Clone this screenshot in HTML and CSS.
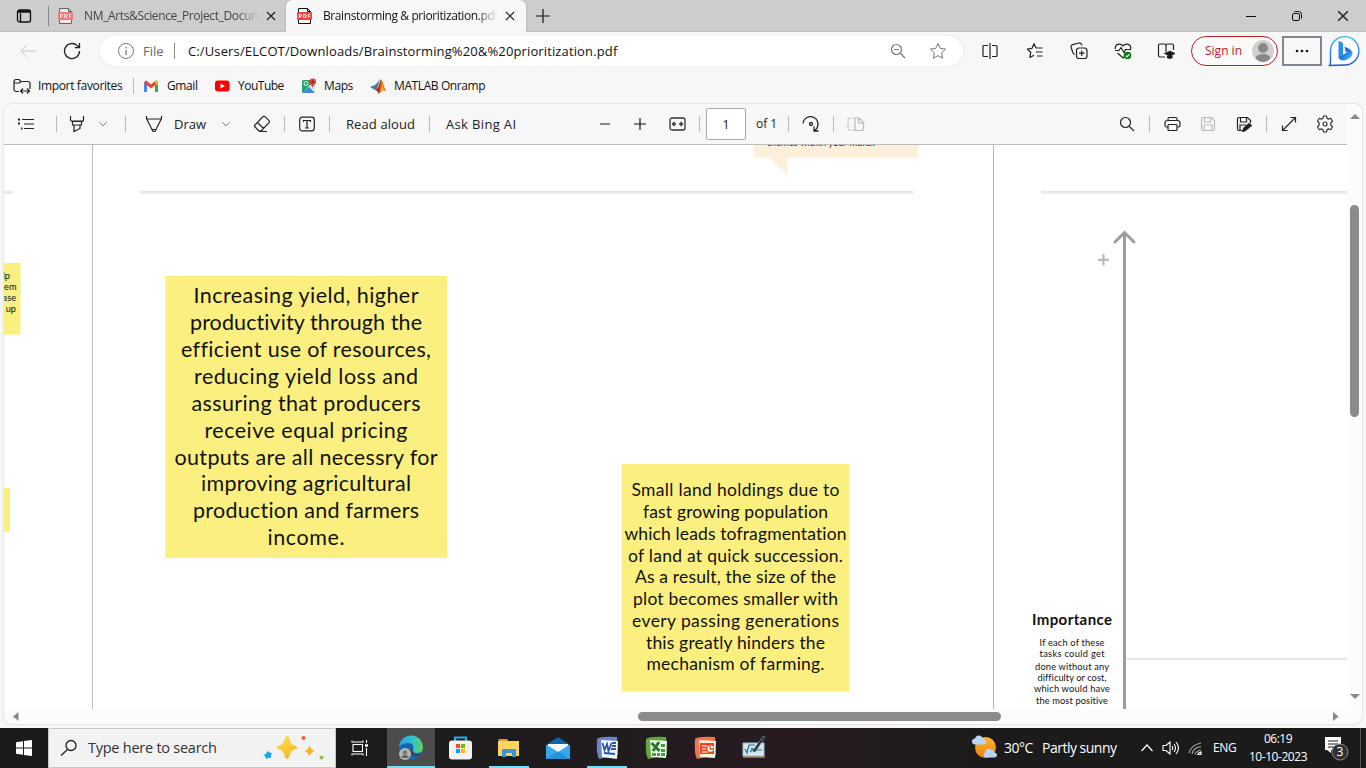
FILE: index.html
```html
<!DOCTYPE html>
<html lang="en">
<head>
<meta charset="utf-8">
<title>Brainstorming &amp; prioritization.pdf</title>
<link rel="stylesheet" href="styles.css">
</head>
<body>
<svg class="defs" width="0" height="0">
  <symbol id="pdf" viewBox="0 0 16 16"><path d="M1.500 5V.5h9l3 3V6M1.500 11v4.500h12V11" fill="#fff" stroke="#111"/><path d="M10.500.5v3h3" fill="none" stroke="#111"/><rect y="4" width="15" height="8" rx="1" fill="#fa3e3e"/><text x="7.500" y="10.300" text-anchor="middle" textLength="12" class="pdf-label">PDF</text></symbol>
  <symbol id="chev" viewBox="0 0 10 10"><path d="M1.500 3.300 5 6.800 8.500 3.300" fill="none" stroke="#777"/></symbol>
  <symbol id="x" viewBox="0 0 10 10"><path d="m1 1 8 8M9 1 1 9" fill="none" stroke="#222" stroke-width="1.200"/></symbol>
</svg>

<header class="tabs">
  <div class="cell"><svg width="16" height="16" fill="none" stroke="#111" stroke-width="1.300"><rect x="1.500" y="2" width="13" height="12" rx="2"/><path d="M2 3.500h12" stroke-width="2.400"/><path d="M4.500 5v9"/></svg></div>
  <div class="tab"><svg class="dim" width="16" height="16"><use href="#pdf"/></svg><span class="title">NM_Arts&amp;Science_Project_Documentation</span><svg width="10" height="10"><use href="#x"/></svg></div>
  <div class="tab active"><svg width="16" height="16"><use href="#pdf"/></svg><span class="title t2">Brainstorming &amp; prioritization.pdf</span><svg width="10" height="10"><use href="#x"/></svg></div>
  <div class="cell"><svg width="14" height="14" stroke="#111" stroke-width="1.200"><path d="M7 0v14M0 7h14"/></svg></div>
  <div></div>
  <div class="cell"><svg width="12" height="12" stroke="#111"><path d="M1 6.500h10"/></svg></div>
  <div class="cell"><svg width="12" height="12" fill="none" stroke="#111"><rect x="1.500" y="3.500" width="7" height="7" rx="1.500"/><path d="M3.500 1.500h4a3 3 0 0 1 3 3v4"/></svg></div>
  <div class="cell"><svg width="12" height="12"><use href="#x"/></svg></div>
</header>

<nav class="nav">
  <div class="cell"><svg width="16" height="16" fill="none" stroke="#c9c9c9"><path d="M16 8H1m6-6L1 8l6 6"/></svg></div>
  <div class="cell"><svg width="18" height="18" fill="none" stroke="#222" stroke-width="1.300"><path d="M16.500 9a7.500 7.500 0 1 1-2.300-5.400L16.300 5.500M16.500 1v4.700h-4.800"/></svg></div>
  <div></div>
  <div class="omnibox">
    <svg width="16" height="16" fill="none" stroke="#777"><circle cx="8" cy="8" r="7.500"/><path d="M8 7v5M8 4v1.500" stroke-width="1.300"/></svg>
    <span class="file">File</span><i class="sep"></i>
    <span class="url">C:/Users/ELCOT/Downloads/Brainstorming%20&amp;%20prioritization.pdf</span>
    <svg class="mag" width="16" height="16" fill="none" stroke="#777" stroke-width="1.200"><circle cx="6.500" cy="6.500" r="5"/><path d="m10.500 10.500 4.500 4.500M4 6.500h5"/></svg>
    <svg class="star" width="18" height="18" viewBox="0 0 18 18" fill="none" stroke="#777" stroke-linejoin="round"><path d="m9 1.500 2.300 4.900 5.200.7-3.800 3.700.9 5.400L9 13.600l-4.600 2.600.9-5.400L1.500 7.100l5.200-.7z"/></svg>
  </div>
  <div></div>
  <div class="cell"><svg width="18" height="18" fill="none" stroke="#222" stroke-width="1.200"><path d="M7 3.500H3a1 1 0 0 0-1 1v9a1 1 0 0 0 1 1h4M11 3.500h4a1 1 0 0 1 1 1v9a1 1 0 0 1-1 1h-4M9 1v16"/></svg></div>
  <div class="cell"><svg width="18" height="18" fill="none" stroke="#222" stroke-width="1.200" stroke-linejoin="round"><path d="M10 6 8 1.700 6 6.300l-4.700.7 3.400 3.300-.8 5.200L8 13.200M10 6h6.500M10 10h6.500M11 14h5.500"/></svg></div>
  <div class="cell"><svg width="18" height="18" fill="none" stroke="#222" stroke-width="1.200"><rect x="6.500" y="6" width="10.500" height="10.500" rx="2.500"/><path d="M11.700 8.500v5.500M9 11.200h5.500M4.500 12.500C3 12 2.800 11 2.300 9L1.200 5.500C.8 4 1.500 3 2.800 2.700l6-1.700C10.300.7 11.300 1.500 12 3.500"/></svg></div>
  <div class="cell"><svg width="18" height="18" fill="none" stroke="#222" stroke-width="1.200"><path d="M1.300 7C.5 2 6.500.5 9 4c2.500-3.500 8.500-2 7.700 3M3.500 11 9 16l1.500-1.500M1 8.500h4l2-3 3 5 1.500-3H17"/><circle cx="13.500" cy="13.500" r="3.800" fill="#107c10" stroke="none"/><path d="m11.800 13.800 1.200 1 2.300-2.500" stroke="#fff"/></svg></div>
  <div class="cell"><svg width="18" height="18" fill="none" stroke="#222" stroke-width="1.200"><path d="M8 15H3a1.500 1.500 0 0 1-1.500-1.500v-10A1.500 1.500 0 0 1 3 2h4.500Q9 2 9 4v6M9 4q0-2 1.500-2H15a1.500 1.500 0 0 1 1.500 1.500V8"/><path d="m8 11.500 5-2 4.500 2-4.500 2zM10.500 14v1.500q2.500 1.500 4.500 0V14z" fill="#111"/></svg></div>
  <div></div>
  <div class="signin"><span>Sign in</span><svg width="22" height="22" viewBox="0 0 22 22"><circle cx="11" cy="11" r="11" fill="#d2d0ce"/><circle cx="11" cy="8" r="5" fill="#8a8886"/><path d="M3.500 18Q5 14 11 14t7.500 4Q15 22 11 22t-7.500-4" fill="#8a8886"/></svg></div>
  <div></div>
  <div class="more"><svg width="14" height="4" fill="#111"><circle cx="2" cy="2" r="1.300"/><circle cx="7" cy="2" r="1.300"/><circle cx="12" cy="2" r="1.300"/></svg></div>
  <div></div>
  <div class="cell"><svg width="32" height="32" viewBox="0 0 32 32"><defs><linearGradient id="b1" x2="0" y2="1"><stop stop-color="#32bdf0"/><stop offset="1" stop-color="#2850cf"/></linearGradient><linearGradient id="b2" x2="1" y2="1"><stop stop-color="#1b48ca"/><stop offset=".5" stop-color="#2476e0"/><stop offset="1" stop-color="#41d2ed"/></linearGradient></defs><path d="M1.500 30.500q1-1.500 1-4V16A14.200 14.200 0 1 1 16 30z" fill="#fff" stroke="url(#b1)" stroke-width="1.400"/><path d="m10.500 6 3 1q1.500.5 1.500 2v10.500l-4.500 3.500z" fill="#2490ef"/><path d="m16.500 11.500 5 2.500q5 3 1.500 8l-5 3q-6 2-7.500-3l5-2.500 3.500-2-1.500-1z" fill="url(#b2)"/></svg></div>
</nav>

<div class="bookmarks">
  <svg width="18" height="16" fill="none" stroke="#222" stroke-width="1.200"><path d="M6 13.500H3a2 2 0 0 1-2-2v-8a2 2 0 0 1 2-2h3l2 2h7a2 2 0 0 1 2 2V11M1.500 5h4.700L8 3.500M8 13h8M10 10.500 7.500 13l2.500 2.500M14 10.500l2.500 2.500-2.500 2.500"/></svg><span class="bm-import">Import favorites</span><i class="sep"></i>
  <svg width="16" height="16" fill="none" stroke-width="3"><path d="M2.500 14V4" stroke="#4285f4"/><path d="M13.500 14V4" stroke="#34a853"/><path d="m2 3.500 6 5 6-5" stroke="#ea4335"/><path d="M13.500 6.500V3" stroke="#fbbc04"/></svg><span class="bm-gmail">Gmail</span>
  <svg width="16" height="16"><rect x="1" y="2.500" width="14.500" height="11" rx="3" fill="#f00"/><path d="m6.500 5.500 4.500 2.500-4.500 2.500z" fill="#fff"/></svg><span class="bm-yt">YouTube</span>
  <svg width="16" height="16"><rect x="1" y="2" width="13" height="13" rx="1.500" fill="#1fa463"/><path d="m2 14 10-10 2 2v9l-6-6z" fill="#dbe3ea"/><path d="m2.500 15 5-5 5 5z" fill="#4285f4"/><circle cx="5" cy="5.500" r="2" fill="none" stroke="#fff"/><path d="M11.500 10C11 7 8.500 6.500 8.500 3.800a3.200 3.200 0 0 1 6.500 0C15 6.500 12.200 7 11.500 10" fill="#dc4437"/><circle cx="11.700" cy="3.800" r="1.200" fill="#7b231e"/></svg><span class="bm-maps">Maps</span>
  <svg width="17" height="16"><path d="m0 9 5-2 3-3 2-3-3 10-2 1z" fill="#3a80ae"/><path d="M5 12 8 8l3-7c2 2 3 9 5.500 13-2-2-3-2-4.500-1L8.500 16C8 13 7 12 5 12" fill="#e56b19"/><path d="M9 10 11 1c0 6-1 10-2.500 15C8 13 7 12 5 12z" fill="#852b20"/><path d="M11 2c1 4 1 8-1 11l4-1z" fill="#ffa326"/></svg><span class="bm-mat">MATLAB Onramp</span>
</div>

<main class="viewer">
  <div class="view-main">
    <div class="toolbar">
      <div class="cell c45"><svg width="18" height="16" fill="none" stroke="#222" stroke-width="1.200"><path d="M5 3.500h12M7 8h10M7 12.500h10"/><path d="M1 3.500h2M1 7.500h2M4 12.500h1.500" stroke-width="2"/></svg></div>
      <i class="sep"></i>
      <div class="cell c40"><svg width="16" height="18" fill="none" stroke="#222" stroke-width="1.200"><path d="M1.500 1v3.500a2 2 0 0 0 2 2h9a2 2 0 0 0 2-2V1M2 6h12M3.500 6.500v3.500h9V6.500M5 10v6.500l6-3V10"/></svg></div>
      <div class="cell c12"><svg width="10" height="10"><use href="#chev"/></svg></div><b class="g15"></b>
      <i class="sep"></i><b class="g16"></b>
      <div class="cell c24"><svg width="18" height="18" fill="none" stroke="#222" stroke-width="1.200"><path d="M1.500 1v3h15V1M2 4.500l6 12h2l6-12M7.500 14.500h3"/></svg></div><b class="g8"></b>
      <span class="draw">Draw</span>
      <div class="cell c12"><svg width="10" height="10"><use href="#chev"/></svg></div>
      <div class="cell c60"><svg width="18" height="18" fill="none" stroke="#222" stroke-width="1.200"><path d="M1.500 10.500 10 1.700q1-1 2 0l4 4q1 1 0 2L8.500 15.500q-1.500 1.500-3 0l-4-4zM4.500 7.500l6 6M7 16.500h7"/></svg></div><b class="g-8"></b>
      <i class="sep"></i>
      <div class="cell c45"><svg width="16" height="16" fill="none" stroke="#222" stroke-width="1.200"><rect x=".7" y="1.200" width="14.600" height="13.600" rx="2.500"/><path d="M4.500 6V4.500h7V6M8 4.500v7.500M6 12h4"/></svg></div>
      <i class="sep"></i><b class="g16"></b>
      <span class="read">Read aloud</span><i class="sep"></i><b class="g16"></b>
      <span class="ask">Ask Bing AI</span>
      <div class="cell c34"><svg width="12" height="12"><path d="M1 6h10" stroke="#888" stroke-width="2"/></svg></div>
      <div class="cell c36"><svg width="12" height="12" stroke="#111" stroke-width="1.200"><path d="M0 6h12M6 0v12"/></svg></div>
      <div class="cell c38"><svg width="17" height="14" fill="none" stroke="#333" stroke-width="1.300"><rect x="1" y="1" width="15" height="12" rx="2"/><path d="M3.500 7H7M10 7h3.500M5.500 5l-2 2 2 2M11.500 5l2 2-2 2"/></svg></div><b class="g3"></b>
      <i class="sep"></i><b class="g6"></b>
      <div class="page-input">1</div><span class="of">of 1</span><i class="sep"></i>
      <div class="cell c45"><svg width="18" height="18" fill="none" stroke="#222" stroke-width="1.300"><path d="M1 8.500A7.500 7.500 0 1 1 12.500 15.500M12 11.500v4.500h4.500"/><circle cx="9" cy="9" r="1.500"/></svg></div>
      <i class="sep"></i>
      <div class="cell c45"><svg width="18" height="14" fill="none" stroke="#bbb" stroke-width="1.200"><path d="M7 1H3a2 2 0 0 0-2 2v8a2 2 0 0 0 2 2h4" stroke-dasharray="2.500 1.500"/><path d="M8 .5v13h6.500a2 2 0 0 0 2-2V5.500L12 1H8M11.500 1v5h5"/></svg></div>
      <b class="fill"></b>
      <div class="cell c44"><svg width="16" height="16" fill="none" stroke="#222" stroke-width="1.200"><circle cx="6.500" cy="6.500" r="5"/><path d="m10.300 10.300 4.700 4.700"/></svg></div>
      <i class="sep"></i>
      <div class="cell c44"><svg width="17" height="16" fill="none" stroke="#222" stroke-width="1.200"><path d="M4 4.500V3q0-1.500 1.500-1.500h6Q13 1.500 13 3v1.500M4 11H2.500Q1 11 1 9.500V7q0-2.500 2.500-2.500h10Q16 4.500 16 7v2.500q0 1.500-1.500 1.500H13"/><rect x="4" y="8.500" width="9" height="6" rx="1"/></svg></div>
      <div class="cell c28"><svg width="16" height="16" fill="none" stroke="#bbb" stroke-width="1.200"><path d="M3 1.500h8.500l3 3V13a1.500 1.500 0 0 1-1.500 1.500H3A1.500 1.500 0 0 1 1.500 13V3A1.500 1.500 0 0 1 3 1.500M4.500 1.500V6h6V1.500M4 14V9h8v5"/></svg></div>
      <div class="cell c44"><svg width="16" height="16" fill="none" stroke="#222" stroke-width="1.200"><path d="M7 14.500H3A1.500 1.500 0 0 1 1.500 13V3A1.500 1.500 0 0 1 3 1.500h8.500l3 3V7M4.500 1.500V6h6V1.500M4 14V9h6"/><path d="m7.500 12.500 5.500-5 2.500 2-6 5-2.500 1z" fill="#222"/></svg></div>
      <i class="sep"></i>
      <div class="cell c44"><svg width="16" height="16" fill="none" stroke="#222" stroke-width="1.200"><path d="M1.500 14.500l13-13M9.500 1.500h5v5M1.500 9.500v5h5"/></svg></div>
      <div class="cell c28"><svg width="18" height="18" viewBox="0 0 18 18" fill="none" stroke="#333" stroke-width="1.200" stroke-linejoin="round"><path d="m7.500 1-.5 2.300-1.500.8-2.200-.8-1.800 3L3.200 8v2l-1.700 1.700 1.800 3 2.200-.8 1.500.8.500 2.300h3l.5-2.300 1.500-.8 2.200.8 1.800-3L14.800 10V8l1.700-1.700-1.800-3-2.200.8-1.500-.8L10.500 1z"/><circle cx="9" cy="9" r="2"/></svg></div>
    </div>
    <svg class="doc" width="1343" height="564" viewBox="4 145 1343 564">
      <path d="M92.500 145v564M993.500 145v564" stroke="#b9b9b9"/>
      <path d="M4 192.300h9M140 192.300h773M1041 192.300h306" stroke="#e8e8e8" stroke-width="3"/>
      <path d="M754 145h164v12.500H787.500V175L769.500 157.500H754z" fill="#fcf0db"/>
      <text x="767" y="146.300" textLength="108" font-size="9.500">themes within your mural.</text>
      <g fill="#fbf07f"><path d="M4 263h16.500v71.500H4zM4 488h6v43.500H4zM165.300 276h282v282h-282zM621.700 464h227.600v227.500H621.700z"/></g>
      <g class="edge-note"><text x="10" y="279">help</text><text x="16.500" y="290">them</text><text x="16" y="301">ease</text><text x="16" y="312">up</text></g>
      <g class="note big">
        <text x="306" y="303" textLength="225">Increasing yield, higher</text>
        <text x="306" y="330" textLength="232">productivity through the</text>
        <text x="306" y="357" textLength="250">efficient use of resources,</text>
        <text x="306" y="383.500" textLength="224">reducing yield loss and</text>
        <text x="306" y="410.500" textLength="229">assuring that producers</text>
        <text x="306" y="437.500" textLength="203">receive equal pricing</text>
        <text x="306" y="464.500" textLength="263">outputs are all necessry for</text>
        <text x="306" y="491" textLength="210">improving agricultural</text>
        <text x="306" y="518" textLength="226">production and farmers</text>
        <text x="306" y="545" textLength="77">income.</text>
      </g>
      <g class="note small">
        <text x="735.500" y="496" textLength="208">Small land holdings due to</text>
        <text x="735.500" y="518" textLength="185">fast growing population</text>
        <text x="735.500" y="540" textLength="222">which leads tofragmentation</text>
        <text x="735.500" y="561.500" textLength="215">of land at quick succession.</text>
        <text x="735.500" y="583" textLength="201">As a result, the size of the</text>
        <text x="735.500" y="605" textLength="205">plot becomes smaller with</text>
        <text x="735.500" y="627" textLength="207">every passing generations</text>
        <text x="735.500" y="649" textLength="179">this greatly hinders the</text>
        <text x="735.500" y="670" textLength="178">mechanism of farming.</text>
      </g>
      <path d="M1124.500 709V233" stroke="#9c9c9c" stroke-width="3"/><path d="m1115 242 9.500-9.500 9.500 9.500" fill="none" stroke="#9c9c9c" stroke-width="3" stroke-linecap="round"/>
      <path d="M1098 259.700h11M1103.500 254v11.500" stroke="#b5b5b5" stroke-width="2"/>
      <path d="M1127 659h220" stroke="#e8e8e8" stroke-width="2"/>
      <text class="heading" x="1072" y="625" textLength="80">Importance</text>
      <g class="note tiny">
        <text x="1072" y="646" textLength="65">If each of these</text>
        <text x="1072" y="657" textLength="65">tasks could get</text>
        <text x="1072" y="669.500" textLength="74">done without any</text>
        <text x="1072" y="681" textLength="69">difficulty or cost,</text>
        <text x="1072" y="692" textLength="76">which would have</text>
        <text x="1072" y="704" textLength="72">the most positive</text>
      </g>
    </svg>
    <div class="hscroll"><svg width="8" height="10" fill="#888"><path d="M6.500 0v9L1 4.500z"/></svg><div class="hthumb"></div><svg width="8" height="10" fill="#888"><path d="M1 0v9l5.500-4.500z"/></svg></div>
  </div>
  <div class="vscroll"><svg width="10" height="8" fill="#888"><path d="M0 6h10L5 1z"/></svg><div class="vthumb"></div><svg width="10" height="8" fill="#888"><path d="M0 1h10L5 6z"/></svg></div>
</main>

<footer class="taskbar">
  <div class="cell"><svg width="16" height="16" fill="#fff"><path d="M0 2.300 7 1.300v6.200H0zM8 1.100 16 0v7.500H8zM0 8.500h7v6.200l-7-1zM8 8.500h8V16l-8-1.100z"/></svg></div>
  <div class="search"><svg width="18" height="18" fill="none" stroke="#222" stroke-width="1.300"><circle cx="11" cy="6.500" r="5"/><path d="m7.500 10.500-6.500 6"/></svg><span>Type here to search</span>
    <svg class="spark" width="62" height="26"><defs><linearGradient id="gold" x2="1" y2="1"><stop stop-color="#ffe04a"/><stop offset="1" stop-color="#f2a51b"/></linearGradient></defs><path d="M24 1q2 0 3 5 1 4 6 5 3 2 0 3-5 1-6 5-1 5-3 5t-3-5q-1-4-6-5-3-1 0-3 5-1 6-5 1-5 3-5M46.500 10q1 5 5.500 6-4.500 1-5.500 5.500-1-4.500-5.500-5.500 4.500-1 5.500-6" fill="url(#gold)"/><path d="M5 16q1 2 4 2-2 2-1 5-2-1-5 1 0-3-2.500-4 3-1 4.500-4" fill="#18a4ed"/><circle cx="40.500" cy="3" r="2" fill="#f26530"/><circle cx="58.500" cy="22.500" r="2" fill="#8ac544"/></svg></div>
  <div class="cell task-view"><svg width="18" height="16" fill="none" stroke="#fff" stroke-width="1.100"><rect x="2" y="4.500" width="9.500" height="7"/><path d="M1 .5V2h11V.5M1 15.500V14h11v1.500M15.500 0v3M15.500 8v8"/><path d="M14 5.500h3" stroke-width="2.500"/></svg></div>
  <div class="cell task current"><svg width="26" height="26" viewBox="0 0 26 26"><defs><linearGradient id="edge" x2="1"><stop stop-color="#2d9fe2"/><stop offset=".6" stop-color="#35c5cc"/><stop offset="1" stop-color="#69d04d"/></linearGradient></defs><circle cx="13" cy="13" r="12" fill="#1465b4"/><path d="M1 12a12 12 0 0 1 24 1q0 5-6 5-5 0-4-3 2-6-4-7-7 0-10 4" fill="url(#edge)"/><path d="M15 15q-1 5 9 4-3 4-8 2-4-1-4-6 1-3 3 0" fill="#464646"/><circle cx="7" cy="19" r="6" fill="#b6b6b6"/><circle cx="7" cy="17.500" r="2.300" fill="#777"/><path d="M3.500 22.500q3.500-4 7 0" stroke="#777" stroke-width="2"/></svg></div>
  <div class="cell"><svg width="24" height="26"><path d="M7 7V2.500h11V7" fill="none" stroke="#27a9e1" stroke-width="2.200"/><rect x="1" y="5.500" width="23" height="19" rx="3" fill="#f2f2f2"/><path d="M8 9h4v4H8z" fill="#f25022"/><path d="M13 9h4v4h-4z" fill="#7fba00"/><path d="M8 14h4v4H8z" fill="#00a4ef"/><path d="M13 14h4v4h-4z" fill="#ffb900"/></svg></div>
  <div class="cell task run"><svg width="22" height="20"><path d="M0 1h9l2 3h-9z" fill="#e3a21a"/><path d="M0 3h21v15H0z" fill="#fcd462"/><path d="M4 19v-8h14v8h-4v-4H8v4z" fill="#3e93d2"/></svg></div>
  <div class="cell"><svg width="24" height="24"><path d="M0 9 12 1l12 8v14H0z" fill="#1261ad"/><path d="M2 8h20v8H2z" fill="#f7f7f7"/><path d="M0 8.500 12 16l12-7.500V23H0z" fill="#33a8ea"/><path d="m0 23 12-7.500L24 23z" fill="#2192db"/></svg></div>
  <div class="cell task run"><svg width="26" height="26"><path d="M3 4q3-3 20-2l1 18-19 4q-3-5-2-20" fill="#6685c2"/><path d="m7 5 17 1-1 18-15-2z" fill="#f4f7fd"/><path d="m8.500 8 2 7 2.500-6 1.500 7 3-8M18 8h4M18 11h4M17 14h5M10 18l11 1" fill="none" stroke="#2b57a7" stroke-width="1.800"/></svg></div>
  <div class="cell"><svg width="26" height="26"><path d="M3 4q3-3 20-2l1 18-19 4q-3-5-2-20" fill="#62a744"/><path d="m7 5 17 1-1 17-15-1z" fill="#eef7e8"/><path d="m8.500 8 8 8M16 7l-6 9" stroke="#287b2d" stroke-width="3"/><path d="M18 9h4v3h-4zM18 14h4v3h-4zM14 18h3v3h-3zM18 18h4v3h-4zM9 18h4v3H9z" fill="#4a994a"/></svg></div>
  <div class="cell"><svg width="26" height="26"><path d="M3 4q3-3 20-2l1 18-19 4q-3-5-2-20" fill="#f17451"/><path d="m7 5 17 1-1 17-15-1z" fill="#fff0e9"/><path d="M8 8h14v11H8z" fill="#e5491c"/><path d="M10 11h5M10 14h4M10 17h6" stroke="#fff"/><circle cx="18.500" cy="13.500" r="3.200" fill="#fff"/><path d="M18 14v-4M18 14h4" stroke="#e5491c" stroke-width="1.300"/></svg></div>
  <div class="cell"><svg width="26" height="26"><path d="M2 8h21v13H2z" fill="#d1e8f0" stroke="#a7bbc2"/><path d="M2 22h22" stroke="#e0b87b"/><path d="m4 14 2 4 2-8h6M10 13l3 4m0-4-4 4M15 15h6" fill="none" stroke="#26759b" stroke-width="1.200"/><path d="m12 16 10-15 2 1-10 15z" fill="#222" stroke="#6b777b"/></svg></div>
  <div></div>
  <div class="cell"><svg width="26" height="26"><defs><linearGradient id="sun" x2="0" y2="1"><stop stop-color="#ffba25"/><stop offset="1" stop-color="#ee7d17"/></linearGradient></defs><circle cx="13.500" cy="12.500" r="10.500" fill="url(#sun)"/><g fill="#b9d4fa"><path d="M3 9.500a3 3 0 0 1 0-6 4 4 0 0 1 7-1.500 3 3 0 0 1 2 2.500q3 1 2 4-1 1-3 1zM13 22.500a3 3 0 0 1 0-5 4 4 0 0 1 6-3 3 3 0 0 1 3 3q3 0 3 2.500 0 2-3 2.500z"/></g></svg></div>
  <div class="weather"><span class="temp">30°C</span><span class="sky">Partly sunny</span></div>
  <div class="cell"><svg width="14" height="14" fill="none" stroke="#fff" stroke-width="1.200"><path d="m1.500 10 5.500-6 5.500 6"/></svg></div>
  <div class="cell"><svg width="18" height="16" fill="none" stroke="#fff" stroke-width="1.100"><path d="M1 5.500h3L8 2v12l-4-3.500H1zM10 6q1.500 2 0 4M12 4q3 4 0 8M14 2q5 6 0 12"/></svg></div>
  <div class="cell"><svg width="16" height="16" fill="none" stroke="#aaa" stroke-width="1.200"><path d="M1 13Q3 5 13 3M4 14q1-6 9-7.500M7 14.500q1-3.500 6-4.500"/><path d="M10 14.500q0-2 3-2.500v2.500z" stroke="#fff"/></svg></div>
  <div class="lang">ENG</div>
  <div class="clock"><span class="time">06:19</span><span class="date">10-10-2023</span></div>
  <div class="action"><svg width="26" height="28"><path d="M1 2h16v13H7v3l-4-3H1z" fill="#fff"/><path d="M4 6h10M4 9h10M4 12h7" stroke="#1c1b1c"/><circle cx="16" cy="17" r="8" fill="#333" stroke="#888"/><text x="16" y="21.300" text-anchor="middle" fill="#fff" font-size="12">3</text></svg></div>
  <div class="peek"></div>
</footer>
</body>
</html>
```
FILE: styles.css
```css
* { box-sizing: border-box; }
body { margin: 0; width: 1366px; height: 768px; overflow: hidden; background: #f7f7f7; color: #111; font: 12px/16px "Open Sans", "Noto Sans", sans-serif; font-variant-ligatures: none; }
svg { display: block; flex: none; }
.defs { position: absolute; }
.cell { display: flex; align-items: center; justify-content: center; flex: none; }
.sep { width: 1px; height: 16px; background: #b8b8b8; flex: none; }
.pdf-label { font: 700 5.500px "Open Sans", sans-serif; fill: #fff; }

.tabs { display: grid; grid-template-columns: 48px 238px 240px 34px 668px 46px 46px 46px; height: 32px; background: #cdcdcd; border-bottom: 1px solid #c0c0c0; }
.tab { display: flex; align-items: center; padding-left: 10px; height: 32px; position: relative; }
.tab:not(.active) { background: linear-gradient(#888, #888) 0 6px / 1px 20px no-repeat; padding-left: 10px; }
.tab.active { padding-left: 11px; background: #f7f7f7; border-radius: 6px 6px 0 0; box-shadow: 0 0 2px #999; clip-path: inset(0 -3px 0 -3px); }
.dim { opacity: .55; }
.title { width: 174px; margin: 0 8px 0 10px; overflow: hidden; white-space: nowrap; color: #444; letter-spacing: -.35px; -webkit-mask-image: linear-gradient(90deg, #000 88%, transparent); mask-image: linear-gradient(90deg, #000 88%, transparent); }
.t2 { color: #111; letter-spacing: -.4px; }

.nav { display: grid; grid-template-columns: 56px 32px 12px 863px 5px 44px 45px 44px 44px 42px 4px 87px 4px 40px 6px 32px; height: 38px; align-items: center; }
.omnibox { display: flex; align-items: center; height: 30px; padding-left: 18px; background: #fff; border-radius: 15px; box-shadow: 0 0 3px #e5e5e5; font-size: 13px; }
.file { width: 31px; margin-left: 9px; color: #666; }
.omnibox .sep { background: #888; }
.url { width: 702px; margin-left: 13px; letter-spacing: .13px; }
.mag { flex: none; }
.star { margin-left: 23px; }
.signin { display: flex; align-items: center; justify-content: space-between; height: 30px; padding: 0 3px 0 13px; border: 1px solid #b3202a; border-radius: 15px; color: #b3202a; background: #fafafa; }
.more { height: 30px; border: 2px solid #80868c; display: flex; align-items: center; justify-content: center; }

.bookmarks { display: flex; align-items: center; height: 34px; padding: 0 0 2px 13px; white-space: nowrap; }
.bookmarks span { flex: none; }
.bm-import { width: 95px; margin-left: 7px; letter-spacing: -.35px; }
.bookmarks .sep { margin-right: 9px; }
.bm-gmail { width: 47px; margin-left: 8px; letter-spacing: -.4px; }
.bm-yt { width: 63px; margin-left: 8px; letter-spacing: -.5px; }
.bm-maps { width: 46px; margin-left: 7px; letter-spacing: -.4px; }
.bm-mat { margin-left: 7px; letter-spacing: -.4px; }

.viewer { display: flex; width: 1358px; height: 620px; margin: 0 4px 4px; border-radius: 8px; overflow: hidden; background: #fcfcfc; box-shadow: 0 0 2px #bbb; }
.view-main { width: 1343px; }
.toolbar { display: flex; align-items: center; height: 41px; background: #f7f7f7; border-bottom: 1px solid #bbb; font-size: 13px; white-space: nowrap; padding-left: 7px; color: #222; }
.toolbar .cell.c45:first-child { width: 30px; margin-right: 15px; }
.toolbar b { flex: none; }
.c12 { width: 12px; } .c24 { width: 24px; } .c28 { width: 28px; } .c34 { width: 34px; } .c36 { width: 36px; }
.c38 { width: 38px; } .c40 { width: 40px; } .c44 { width: 44px; } .c45 { width: 44px; } .c60 { width: 60px; }
.g3 { width: 3px; } .g6 { width: 6px; } .g8 { width: 8px; } .g15 { width: 16px; } .g16 { width: 16px; } .g-8 { margin-left: -8px; }
.toolbar .fill { flex: 1; }
.toolbar .c28:last-child { margin-right: 8px; }
.draw { width: 46px; }
.read { width: 83px; letter-spacing: .1px; }
.ask { width: 142px; letter-spacing: .35px; }
.page-input { width: 40px; height: 32px; border: 1px solid #aaa; border-radius: 2px; background: #fff; line-height: 30px; text-align: center; flex: none; }
.of { width: 42px; padding-left: 10px; font-size: 12px; }
.draw, .read, .ask, .of { flex: none; }

.doc { background: #fff; font-family: Lato, sans-serif; fill: #111; }
.note { text-anchor: middle; }
.edge-note { text-anchor: end; font-size: 9.200px; }
.big { font-size: 21.500px; }
.small { font-size: 17.500px; }
.tiny { font-size: 9.300px; }
.heading { font-size: 15px; font-weight: 700; text-anchor: middle; }

.hscroll { display: flex; align-items: center; height: 15px; padding: 0 7px 0 8px; }
.hthumb { width: 363px; height: 9px; margin: 0 331px 0 618px; border-radius: 5px; background: #8b8b8b; }
.vscroll { display: flex; flex-direction: column; align-items: center; width: 15px; padding-top: 9px; }
.vthumb { width: 9px; height: 212px; margin: 84px 0 276px; border-radius: 5px; background: #8b8b8b; flex: none; }

.taskbar { display: grid; grid-template-columns: 48px 288px 51px 48px 49px 49px 49px 49px 49px 49px 49px 194px 26px 137px 24px 24px 26px 32px 74px 45px 6px; height: 40px; background: linear-gradient(90deg, #1b1b1b, #1d1b1c 35%, #271b21 58%, #1b1b1b 73%); color: #fff; }
.search { display: flex; align-items: center; padding: 0 9px 0 11px; background: #f2f2f2; border: 1px solid #c6c6c6; color: #333; font-size: 14.500px; }
.search span { width: 175px; margin-left: 10px; letter-spacing: -.25px; white-space: nowrap; }
.task-view { padding-right: 3px; }
.current { background: #4c4c4c; }
.task { border-bottom: 2px solid #76dcfb; padding-top: 2px; }
.run { margin: 0 4px 0 5px; }
.weather { display: flex; align-items: center; padding-left: 6px; font-size: 14px; white-space: nowrap; }
.temp { width: 38px; letter-spacing: -.5px; }
.sky { letter-spacing: -.5px; }
.lang { display: flex; align-items: center; padding-left: 4px; font-size: 12px; letter-spacing: -.3px; }
.clock { display: flex; flex-direction: column; align-items: center; justify-content: center; line-height: 18px; }
.time { letter-spacing: -.5px; }
.date { letter-spacing: -.45px; }
.action { display: flex; align-items: center; padding: 2px 0 0 9px; }
.peek { border-left: 1px solid #555; }
```
